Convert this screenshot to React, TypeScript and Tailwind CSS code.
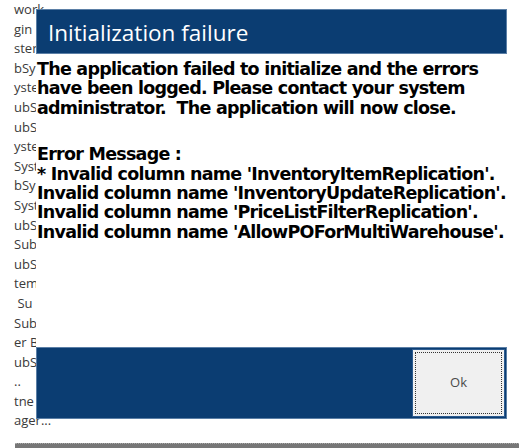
import React from 'react'

const sideLines = [
  'work', 'gin', 'ster', 'bSy', 'yste', 'ubS', 'ubS', 'yste', 'Syst', 'bSy', 'Syst',
  'ubS', 'Sub', 'ubS', 'tem', ' Su', 'Sub', 'er B', 'ubS', '..', 'tne', 'ager...',
]

const errors = [
  "* Invalid column name 'InventoryItemReplication'.",
  "Invalid column name 'InventoryUpdateReplication'.",
  "Invalid column name 'PriceListFilterReplication'.",
  "Invalid column name 'AllowPOForMultiWarehouse'.",
]

export default function App() {
  return (
    <div className="relative h-[448px] w-[528px] overflow-hidden bg-white">
      {/* list behind the dialog */}
      <div className="flex flex-col pl-[14px] font-['Open_Sans',sans-serif] text-[13px] leading-[19.6px] text-[#3a3a3a]">
        {sideLines.map((t, i) => (
          <div key={i} className="whitespace-pre">
            {t}
          </div>
        ))}
      </div>
      <div className="absolute bottom-0 left-[15px] h-[5px] w-[504px] border-t border-dotted border-[#aaa] bg-[#777]" />

      {/* dialog */}
      <div className="absolute left-[36px] top-[9px] flex h-[410px] w-[471px] flex-col bg-white">
        <div className="flex h-[45px] shrink-0 items-center border border-[#5b7fa6] bg-[#0b3d72] pl-[11px] pt-[2px] font-['Open_Sans',sans-serif] text-[22.5px] text-white">
          Initialization failure
        </div>
        <div className="flex-1 pl-px pt-[6px] font-['DejaVu_Sans',sans-serif] text-[17.5px] font-bold leading-[19.4px] tracking-[-0.75px] text-black">
          <p>
            The application failed to initialize and the errors have been logged. Please contact
            your system administrator.&nbsp; The application will now close.
          </p>
          <div className="mt-[27px]">
            <div>Error Message :</div>
            {errors.map(e => (
              <div key={e} className="whitespace-pre">
                {e}
              </div>
            ))}
          </div>
        </div>
        <div className="flex h-[72px] shrink-0 justify-end border border-[#5b7fa6] bg-[#0b3d72] p-px">
          <button className="flex w-[93px] items-center justify-center border border-[#2b5a8f] bg-[#f0f0f0] p-[2px]">
            <span className="flex h-full w-full items-center justify-center border border-dotted border-[#333] font-['Open_Sans',sans-serif] text-[13px] text-[#4a4a4a]">
              Ok
            </span>
          </button>
        </div>
      </div>
    </div>
  )
}
